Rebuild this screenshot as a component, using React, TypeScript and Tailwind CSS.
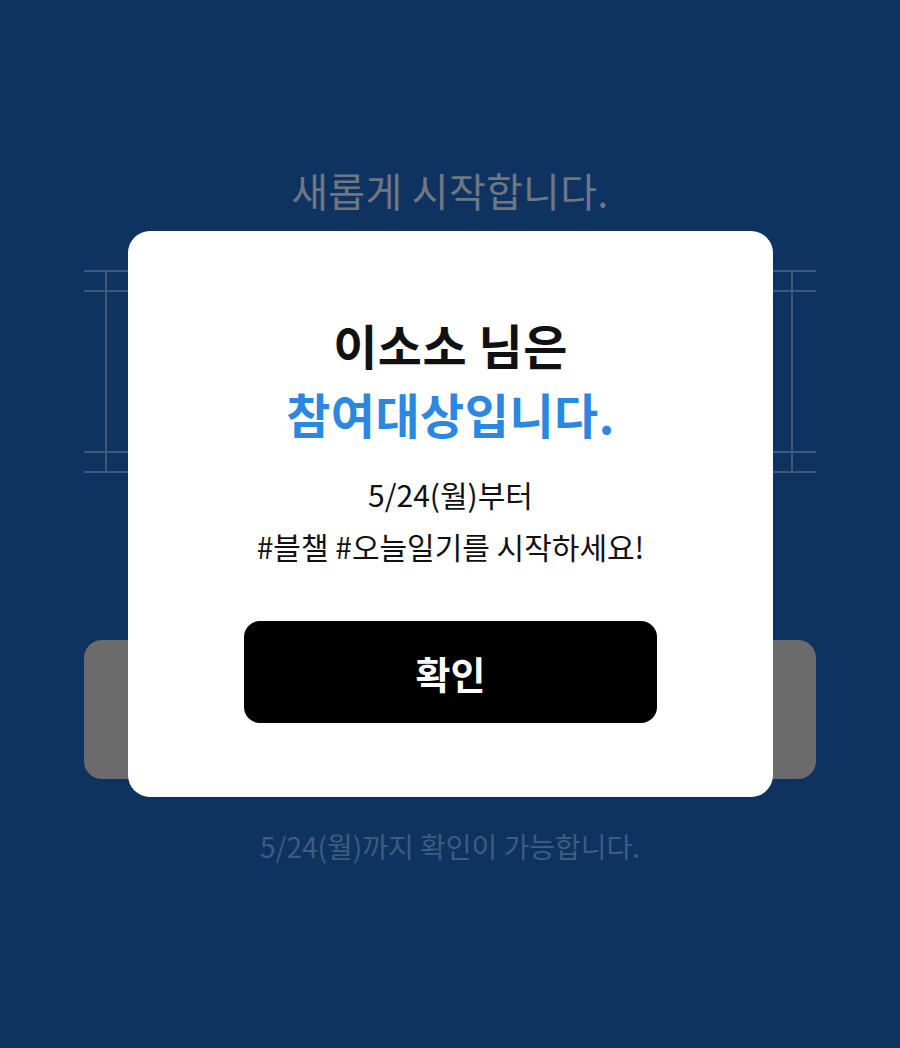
import React from 'react';

const font = { fontFamily: '"Noto Sans CJK KR", "Noto Sans", sans-serif' };

function BackgroundPage() {
    return (
        <div className="px-[84px] pt-[166px] flex flex-col">
            <h1 className="text-center text-[40px] leading-[48px] text-[#6e7782] font-normal tracking-[0.3px]">
                새롭게 시작합니다.
            </h1>

            {/* Decorative frame */}
            <div className="mt-[56px] h-[203px] flex flex-col border-y-2 border-[#3f5778]">
                <div className="h-[18px] ml-[21px] mr-[23px] border-x-2 border-[#3f5778]" />
                <div className="flex-1 border-y-2 border-[#3f5778]">
                    <div className="h-full ml-[21px] mr-[23px] border-x-2 border-[#3f5778]" />
                </div>
                <div className="h-[18px] ml-[21px] mr-[23px] border-x-2 border-[#3f5778]" />
            </div>

            <div className="mt-[167px] h-[139px] rounded-[18px] bg-[#6b6b6b]" />

            <p className="mt-[49px] text-center text-[28px] leading-[36px] text-[#3f5b80]">
                5/24(월)까지 확인이 가능합니다.
            </p>
        </div>
    );
}

function NoticeModal() {
    return (
        <div className="absolute left-[128px] top-[231px] w-[645px] h-[566px] bg-white rounded-[22px] flex flex-col items-center pt-[85px]">
            <p className="text-[48px] leading-[56px] font-bold text-[#111] tracking-[0.5px]">이소소 님은</p>
            <p className="mt-[13px] text-[48px] leading-[56px] font-bold text-[#2b87e2] tracking-[0.5px]">참여대상입니다.</p>
            <p className="mt-[33px] text-[30px] leading-[40px] text-[#111]">5/24(월)부터</p>
            <p className="mt-[12px] text-[30px] leading-[40px] text-[#111]">#블챌 #오늘일기를 시작하세요!</p>
            <button className="mt-[55px] w-[413px] h-[102px] rounded-[16px] bg-black text-white text-[38px] font-bold">
                확인
            </button>
        </div>
    );
}

export default function App() {
    return (
        <div className="relative w-full min-h-[1048px] bg-[#0e3360] overflow-hidden" style={font}>
            <BackgroundPage />
            <NoticeModal />
        </div>
    );
}
